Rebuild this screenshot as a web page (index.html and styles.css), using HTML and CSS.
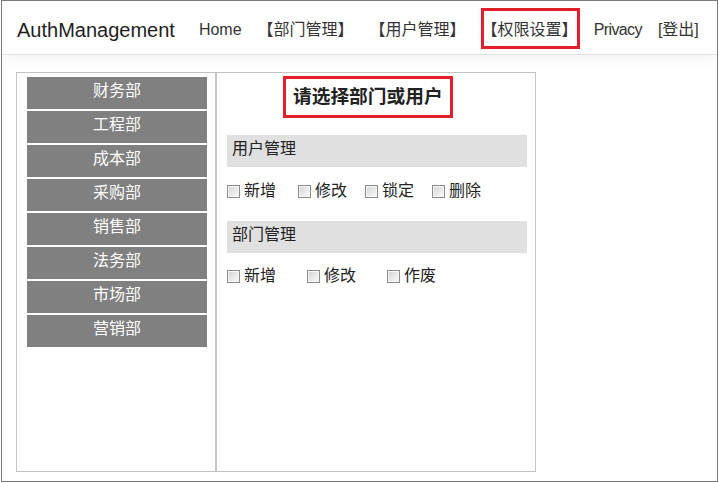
FILE: index.html
```html
<!DOCTYPE html>
<html lang="zh-CN">
<head>
<meta charset="utf-8">
<title>AuthManagement</title>
<link rel="stylesheet" href="styles.css">
</head>
<body>
<div class="frame">
  <header class="navbar">
    <a class="brand" href="#">AuthManagement</a>
    <nav class="links">
      <a class="link" href="#">Home</a>
      <a class="link" href="#">【部门管理】</a>
      <a class="link" href="#">【用户管理】</a>
      <a class="link" href="#"><span class="hl">【权限设置】</span></a>
      <a class="link privacy" href="#">Privacy</a>
      <a class="link" href="#">[登出]</a>
    </nav>
  </header>
  <main class="main">
    <div class="panel">
      <aside class="depts">
        <div class="dept">财务部</div>
        <div class="dept">工程部</div>
        <div class="dept">成本部</div>
        <div class="dept">采购部</div>
        <div class="dept">销售部</div>
        <div class="dept">法务部</div>
        <div class="dept">市场部</div>
        <div class="dept">营销部</div>
      </aside>
      <section class="perm">
        <h3 class="title">请选择部门或用户</h3>
        <div class="group-head first">用户管理</div>
        <div class="opts opts-user">
          <label class="opt"><input type="checkbox">新增</label>
          <label class="opt"><input type="checkbox">修改</label>
          <label class="opt"><input type="checkbox">锁定</label>
          <label class="opt"><input type="checkbox">删除</label>
        </div>
        <div class="group-head">部门管理</div>
        <div class="opts opts-dept">
          <label class="opt"><input type="checkbox">新增</label>
          <label class="opt"><input type="checkbox">修改</label>
          <label class="opt"><input type="checkbox">作废</label>
        </div>
      </section>
    </div>
  </main>
</div>
</body>
</html>
```

FILE: styles.css
```css
html, body {
  margin: 0;
  padding: 0;
  background: #ffffff;
}

body {
  font-family: "Liberation Sans", "Noto Sans CJK SC", sans-serif;
  color: #222222;
}

.frame {
  box-sizing: border-box;
  margin-left: 1px;
  width: 717px;
  height: 482px;
  border: 1px solid #7a7a7a;
  overflow: hidden;
}

.navbar {
  display: flex;
  align-items: center;
  box-sizing: border-box;
  height: 54px;
  padding: 4px 0 0 15px;
  border-bottom: 1px solid #e2e2e2;
  box-shadow: 0 4px 12px rgba(0, 0, 0, 0.05);
  background: #ffffff;
}

.brand {
  font-size: 20px;
  line-height: 30px;
  color: #1e1e1e;
  text-decoration: none;
  margin-right: 16px;
}

.links {
  display: flex;
  align-items: center;
}

.link {
  font-size: 16px;
  line-height: 24px;
  padding: 0 8px;
  color: #333333;
  text-decoration: none;
  white-space: nowrap;
}

.privacy {
  letter-spacing: -0.6px;
}

.hl {
  position: relative;
}

.hl::after {
  content: "";
  position: absolute;
  left: -1px;
  right: -2px;
  top: -13px;
  bottom: -11px;
  border: 3px solid #e3202a;
}

.main {
  padding: 17px 0 0 14px;
}

.panel {
  display: flex;
  width: 520px;
  height: 400px;
  box-sizing: border-box;
  border: 1px solid #c4c4c4;
}

.depts {
  width: 198px;
  box-sizing: content-box;
  border-right: 2px solid #c4c4c4;
  padding: 4px 0 0 10px;
  box-sizing: border-box;
  width: 200px;
}

.dept {
  width: 180px;
  height: 32px;
  margin-bottom: 2px;
  background: #808080;
  color: #ffffff;
  font-size: 16px;
  line-height: 28px;
  text-align: center;
}

.perm {
  flex: 1;
  padding: 3px 8px 0 10px;
}

.title {
  display: inline-block;
  margin: 0 0 0 56px;
  padding: 0 7px;
  border: 3px solid #e3202a;
  font-size: 18.72px;
  font-weight: bold;
  line-height: 36px;
  color: #222222;
}

.group-head {
  height: 32px;
  margin-top: 18px;
  padding-left: 5px;
  background: #e0e0e0;
  font-size: 16px;
  line-height: 28px;
  color: #222222;
}

.group-head.first {
  margin-top: 17px;
}

.opts {
  display: flex;
  align-items: center;
  height: 24px;
}

.opts-user {
  margin-top: 12px;
}

.opts-dept {
  margin-top: 11px;
}

.opt {
  display: flex;
  align-items: center;
  font-size: 16px;
  line-height: 24px;
  color: #222222;
}

.opts-user .opt {
  margin-right: 18px;
}

.opts-user .opt:first-child {
  margin-right: 22px;
}

.opts-dept .opt {
  margin-right: 31px;
}

.opt input {
  -webkit-appearance: none;
  appearance: none;
  box-sizing: border-box;
  width: 13px;
  height: 13px;
  margin: 0 4px 0 0;
  border: 1px solid #8c8c8c;
  background: linear-gradient(135deg, #d4d4d4 0%, #f4f4f4 80%, #ffffff 100%);
  box-shadow: inset 0 0 0 1px #f6f6f6;
}
```
